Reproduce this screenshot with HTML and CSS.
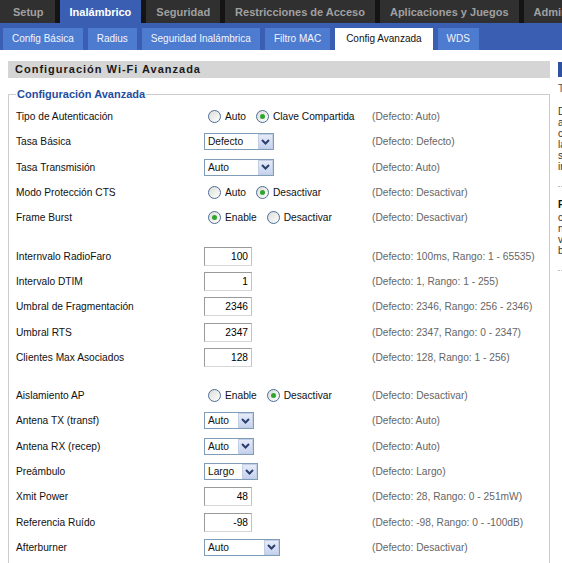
FILE: index.html
```html
<!DOCTYPE html>
<html lang="es">
<head>
  <meta charset="UTF-8">
  <meta name="viewport" content="width=device-width, initial-scale=1.0">
  <title>Config Avanzada</title>
  <link rel="stylesheet" href="styles.css">
</head>
<body>
<div class="page">

  <div class="topnav">
    <a href="#">Setup</a>
    <a href="#" class="active">Inalámbrico</a>
    <a href="#">Seguridad</a>
    <a href="#">Restricciones de Acceso</a>
    <a href="#">Aplicaciones y Juegos</a>
    <a href="#">Administración</a>
  </div>

  <div class="subnav">
    <a href="#">Config Básica</a>
    <a href="#">Radius</a>
    <a href="#">Seguridad Inalámbrica</a>
    <a href="#">Filtro MAC</a>
    <a href="#" class="active">Config Avanzada</a>
    <a href="#">WDS</a>
  </div>

  <div class="main">
    <div class="content">
      <h2 class="section-title">Configuración Wi-Fi Avanzada</h2>

      <fieldset>
        <legend>Configuración Avanzada</legend>

        <div class="row">
          <div class="label">Tipo de Autenticación</div>
          <div class="field">
            <span class="choice"><span class="radio"></span>Auto</span>
            <span class="choice"><span class="radio on"></span>Clave Compartida</span>
          </div>
          <div class="hint">(Defecto: Auto)</div>
        </div>

        <div class="row">
          <div class="label">Tasa Básica</div>
          <div class="field">
            <span class="select sel-wide"><span class="value">Defecto</span><span class="btn"><svg width="9" height="6" viewBox="0 0 9 6"><path d="M1 1 L4.5 4.5 L8 1" fill="none" stroke="#2b3f6e" stroke-width="2"/></svg></span></span>
          </div>
          <div class="hint">(Defecto: Defecto)</div>
        </div>

        <div class="row">
          <div class="label">Tasa Transmisión</div>
          <div class="field">
            <span class="select sel-wide"><span class="value">Auto</span><span class="btn"><svg width="9" height="6" viewBox="0 0 9 6"><path d="M1 1 L4.5 4.5 L8 1" fill="none" stroke="#2b3f6e" stroke-width="2"/></svg></span></span>
          </div>
          <div class="hint">(Defecto: Auto)</div>
        </div>

        <div class="row">
          <div class="label">Modo Protección CTS</div>
          <div class="field">
            <span class="choice"><span class="radio"></span>Auto</span>
            <span class="choice"><span class="radio on"></span>Desactivar</span>
          </div>
          <div class="hint">(Defecto: Desactivar)</div>
        </div>

        <div class="row">
          <div class="label">Frame Burst</div>
          <div class="field">
            <span class="choice"><span class="radio on"></span>Enable</span>
            <span class="choice"><span class="radio"></span>Desactivar</span>
          </div>
          <div class="hint">(Defecto: Desactivar)</div>
        </div>

        <div class="spacer"></div>

        <div class="row">
          <div class="label">Internvalo RadioFaro</div>
          <div class="field"><input class="num" type="text" value="100"></div>
          <div class="hint">(Defecto: 100ms, Rango: 1 - 65535)</div>
        </div>

        <div class="row">
          <div class="label">Intervalo DTIM</div>
          <div class="field"><input class="num" type="text" value="1"></div>
          <div class="hint">(Defecto: 1, Rango: 1 - 255)</div>
        </div>

        <div class="row">
          <div class="label">Umbral de Fragmentación</div>
          <div class="field"><input class="num" type="text" value="2346"></div>
          <div class="hint">(Defecto: 2346, Rango: 256 - 2346)</div>
        </div>

        <div class="row">
          <div class="label">Umbral RTS</div>
          <div class="field"><input class="num" type="text" value="2347"></div>
          <div class="hint">(Defecto: 2347, Rango: 0 - 2347)</div>
        </div>

        <div class="row">
          <div class="label">Clientes Max Asociados</div>
          <div class="field"><input class="num" type="text" value="128"></div>
          <div class="hint">(Defecto: 128, Rango: 1 - 256)</div>
        </div>

        <div class="spacer"></div>

        <div class="row">
          <div class="label">Aislamiento AP</div>
          <div class="field">
            <span class="choice"><span class="radio"></span>Enable</span>
            <span class="choice"><span class="radio on"></span>Desactivar</span>
          </div>
          <div class="hint">(Defecto: Desactivar)</div>
        </div>

        <div class="row">
          <div class="label">Antena TX (transf)</div>
          <div class="field">
            <span class="select sel-short"><span class="value">Auto</span><span class="btn"><svg width="9" height="6" viewBox="0 0 9 6"><path d="M1 1 L4.5 4.5 L8 1" fill="none" stroke="#2b3f6e" stroke-width="2"/></svg></span></span>
          </div>
          <div class="hint">(Defecto: Auto)</div>
        </div>

        <div class="row">
          <div class="label">Antena RX (recep)</div>
          <div class="field">
            <span class="select sel-short"><span class="value">Auto</span><span class="btn"><svg width="9" height="6" viewBox="0 0 9 6"><path d="M1 1 L4.5 4.5 L8 1" fill="none" stroke="#2b3f6e" stroke-width="2"/></svg></span></span>
          </div>
          <div class="hint">(Defecto: Auto)</div>
        </div>

        <div class="row">
          <div class="label">Preámbulo</div>
          <div class="field">
            <span class="select sel-mid"><span class="value">Largo</span><span class="btn"><svg width="9" height="6" viewBox="0 0 9 6"><path d="M1 1 L4.5 4.5 L8 1" fill="none" stroke="#2b3f6e" stroke-width="2"/></svg></span></span>
          </div>
          <div class="hint">(Defecto: Largo)</div>
        </div>

        <div class="row">
          <div class="label">Xmit Power</div>
          <div class="field"><input class="num" type="text" value="48"></div>
          <div class="hint">(Defecto: 28, Rango: 0 - 251mW)</div>
        </div>

        <div class="row">
          <div class="label">Referencia Ruído</div>
          <div class="field"><input class="num" type="text" value="-98"></div>
          <div class="hint">(Defecto: -98, Rango: 0 - -100dB)</div>
        </div>

        <div class="row">
          <div class="label">Afterburner</div>
          <div class="field">
            <span class="select sel-long"><span class="value">Auto</span><span class="btn"><svg width="9" height="6" viewBox="0 0 9 6"><path d="M1 1 L4.5 4.5 L8 1" fill="none" stroke="#2b3f6e" stroke-width="2"/></svg></span></span>
          </div>
          <div class="hint">(Defecto: Desactivar)</div>
        </div>

        <div class="spacer"></div>
      </fieldset>
    </div>

    <div class="help">
      <div class="help-head">Ayuda</div>
      <p class="help-more">Texto de ayuda...</p>
      <p>Desde aquí puede<br>ajustar la<br>configuración de<br>las opciones<br>según su red<br>inalámbrica.</p>
      <hr>
      <h4>Frame Burst:</h4>
      <p>con Frame Burst<br>notará un mejor<br>valor de ancho de<br>banda.</p>
      <hr>
    </div>
  </div>

</div>
</body>
</html>
```

FILE: styles.css
```css
html, body {
  margin: 0;
  padding: 0;
  overflow: hidden;
}

body {
  font-family: "Liberation Sans", Arial, sans-serif;
  font-size: 10.2px;
  color: #111;
  background-color: #fff;
}

.page {
  width: 800px;
}

/* top level tabs */
.topnav {
  display: flex;
  gap: 5px;
  height: 23px;
  background-color: #141414;
}

.topnav a {
  display: flex;
  align-items: center;
  padding: 1px 10px 0;
  font-size: 11px;
  font-weight: bold;
  color: #a0a0a0;
  text-decoration: none;
  background-color: #303030;
}

.topnav a:first-child {
  padding-left: 13px;
  padding-right: 11px;
}

.topnav a.active {
  color: #fff;
  background-color: #3a5fb2;
}

/* second level tabs */
.subnav {
  display: flex;
  align-items: flex-end;
  gap: 5px;
  height: 27px;
  padding-left: 3px;
  background-color: #3a5fb2;
}

.subnav a {
  display: block;
  height: 22px;
  line-height: 22px;
  padding: 0 9px;
  font-size: 10px;
  color: #f2f5fd;
  text-decoration: none;
  background-color: #4c7bd0;
}

.subnav a.active {
  padding: 0 11px;
  color: #111;
  background-color: #fff;
}

.main {
  display: flex;
  padding-top: 11px;
}

.content {
  width: 542px;
  margin-left: 8px;
}

.section-title {
  margin: 0;
  height: 17px;
  line-height: 17px;
  padding-left: 7px;
  font-size: 11px;
  letter-spacing: 1px;
  color: #1a1a1a;
  background-color: #d5d5d5;
}

fieldset {
  margin: 10px 0 0;
  padding: 4px 7px 0;
  border: 1px solid #cdcdcd;
}

legend {
  padding: 0 1px;
  font-size: 11px;
  font-weight: bold;
  color: #1f4d9f;
}

.row {
  display: flex;
  align-items: center;
  height: 25.3px;
}

.spacer {
  height: 13px;
}

.label {
  width: 188px;
}

.field {
  display: flex;
  align-items: center;
  width: 168px;
}

.hint {
  color: #666;
}

/* radio buttons */
.choice {
  display: inline-flex;
  align-items: center;
  margin-left: 4px;
  margin-right: 6px;
}

.radio {
  display: inline-flex;
  align-items: center;
  justify-content: center;
  box-sizing: border-box;
  width: 13px;
  height: 13px;
  margin-right: 4px;
  border: 1px solid #4a6d96;
  border-radius: 50%;
  background: linear-gradient(135deg, #dcdcd7, #fff);
}

.radio.on::after {
  content: "";
  width: 5px;
  height: 5px;
  border-radius: 50%;
  background-color: #2fa52f;
}

/* drop downs */
.select {
  display: inline-flex;
  align-items: center;
  box-sizing: border-box;
  height: 17px;
  border: 1px solid #7f9db9;
  background-color: #fff;
}

.select .value {
  padding-left: 3px;
}

.select .btn {
  display: flex;
  align-items: center;
  justify-content: center;
  box-sizing: border-box;
  width: 15px;
  height: 15px;
  margin-left: auto;
  border: 1px solid #c2cde6;
  background: linear-gradient(#e6ebf7, #c6d2ee);
}

.sel-wide {
  width: 70px;
}

.sel-short {
  width: 50px;
}

.sel-mid {
  width: 54px;
}

.sel-long {
  width: 76px;
}

/* number boxes */
.num {
  box-sizing: border-box;
  width: 48px;
  height: 19px;
  margin: 0;
  padding: 0 3px 0 0;
  font-family: inherit;
  font-size: 10.2px;
  color: #000;
  text-align: right;
  border: 1px solid #9a9a9a;
  border-right-color: #c4c4c4;
  border-bottom-color: #d6d6d6;
}

/* help column */
.help {
  width: 200px;
  margin-left: 8px;
  color: #333;
  font-size: 10px;
}

.help-head {
  height: 15px;
  margin-top: 1px;
  padding-left: 8px;
  line-height: 15px;
  font-weight: bold;
  color: #fff;
  background-color: #2e52a0;
}

.help p {
  margin: 0;
  line-height: 11px;
}

.help .help-more {
  margin: 6px 0 12px;
  color: #555;
}

.help hr {
  margin: 14px 0 12px;
  border: 0;
  border-top: 1px dotted #bbb;
}

.help h4 {
  margin: 0 0 2px;
  font-size: 10px;
  color: #111;
}
```
